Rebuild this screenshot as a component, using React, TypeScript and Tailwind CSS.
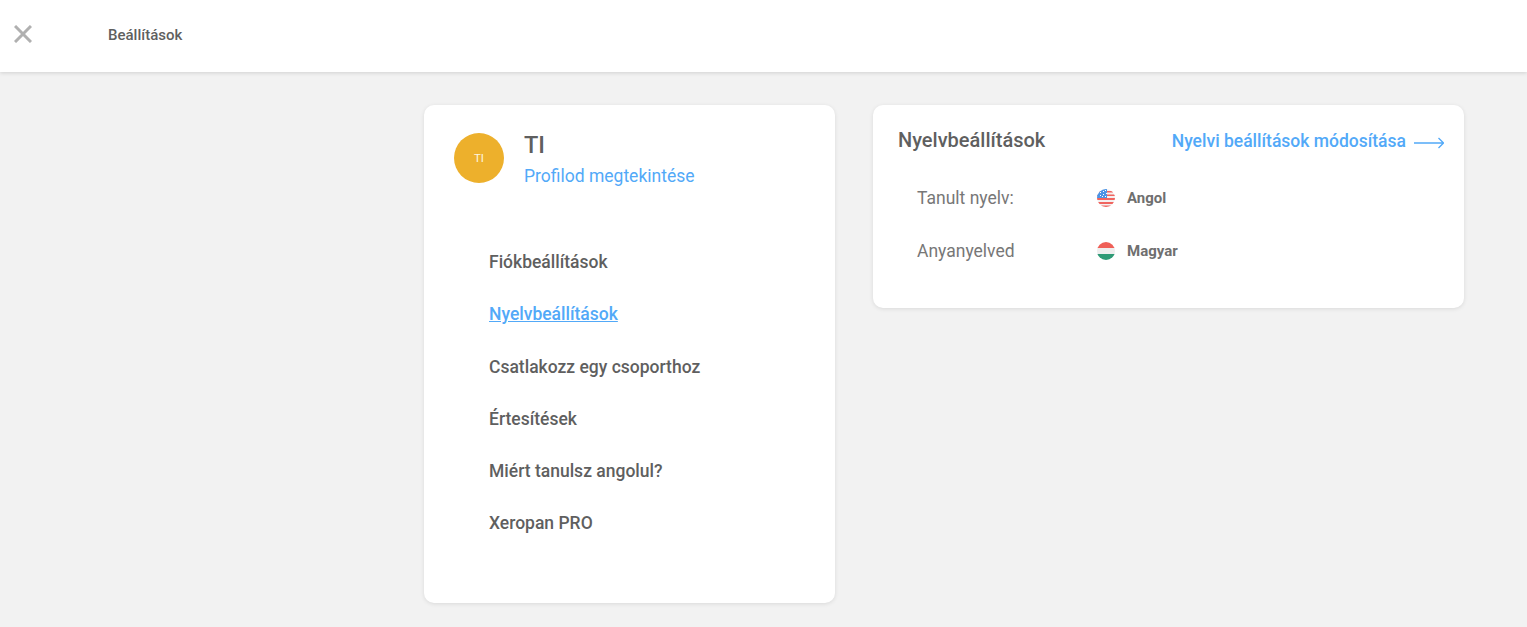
const menu = [
  { label: 'Fiókbeállítások', active: false },
  { label: 'Nyelvbeállítások', active: true },
  { label: 'Csatlakozz egy csoporthoz', active: false },
  { label: 'Értesítések', active: false },
  { label: 'Miért tanulsz angolul?', active: false },
  { label: 'Xeropan PRO', active: false },
];

function UsFlag() {
  return (
    <svg width="18" height="18" viewBox="0 0 18 18" className="shrink-0">
      <defs>
        <clipPath id="us-clip">
          <circle cx="9" cy="9" r="9" />
        </clipPath>
      </defs>
      <g clipPath="url(#us-clip)">
        <rect width="18" height="18" fill="#f5f0f0" />
        <rect y="2" width="18" height="1.5" fill="#f0645f" />
        <rect y="5.5" width="18" height="1.5" fill="#f0645f" />
        <rect y="9" width="18" height="2" fill="#f0645f" />
        <rect y="13" width="18" height="2" fill="#f0645f" />
        <rect y="16.5" width="18" height="2" fill="#f0645f" />
        <rect width="10" height="9" fill="#4a94e6" />
        <path d="M3 3.5h1M6 2.5h1M8 1.5h1M3 6.5h1M6 5.5h1M9 4.5h1M5 7.5h1M8 7.5h1" stroke="#fff" strokeWidth="1" />
      </g>
    </svg>
  );
}

function HuFlag() {
  return (
    <svg width="18" height="18" viewBox="0 0 18 18" className="shrink-0">
      <defs>
        <clipPath id="hu-clip">
          <circle cx="9" cy="9" r="9" />
        </clipPath>
      </defs>
      <g clipPath="url(#hu-clip)">
        <rect width="18" height="6" fill="#ef5f57" />
        <rect y="6" width="18" height="6" fill="#eeeeee" />
        <rect y="12" width="18" height="6" fill="#2f9a76" />
      </g>
    </svg>
  );
}

export default function App() {
  return (
    <div className="min-h-[627px] bg-[#f2f2f2] font-['Roboto',sans-serif] text-[#5f5f5f]">
      <header className="flex h-[72px] items-center bg-white pb-[4px] shadow-[0_1px_4px_rgba(0,0,0,0.14)]">
        <button className="ml-[14px] flex h-[18px] w-[18px] items-center justify-center">
          <svg width="18" height="18" viewBox="0 0 18 18" fill="none" stroke="#b0b0b0" strokeWidth="3">
            <path d="M1 1l16 16M17 1L1 17" />
          </svg>
        </button>
        <span className="ml-[76px] pt-[2px] text-[15px] font-medium">Beállítások</span>
      </header>

      <main className="flex items-start pt-[33px] pl-[424px]">
        <section className="h-[498px] w-[411px] rounded-[10px] bg-white pt-7 pl-[30px] shadow-[0_1px_4px_rgba(0,0,0,0.1)]">
          <div className="flex items-start gap-[20px]">
            <div className="flex h-[50px] w-[50px] items-center justify-center rounded-full bg-[#edb02c] pt-[2px] text-[11.5px] text-[#fdf5e0]">
              TI
            </div>
            <div>
              <div className="text-[23.5px] leading-[24px] font-medium">TI</div>
              <a className="mt-[7px] block text-[17.5px] leading-[24px] text-[#52a9f8]">Profilod megtekintése</a>
            </div>
          </div>

          <nav className="mt-[62.2px] ml-[35px] flex flex-col gap-[28.2px]">
            {menu.map((item) => (
              <a
                key={item.label}
                className={`text-[17.5px] leading-[24px] font-medium ${item.active ? 'text-[#52a9f8] underline' : ''}`}
              >
                {item.label}
              </a>
            ))}
          </nav>
        </section>

        <section className="ml-[38px] h-[203px] w-[591px] rounded-[10px] bg-white px-[20px] pt-[22px] pl-[25px] shadow-[0_1px_4px_rgba(0,0,0,0.1)]">
          <div className="flex h-7 items-start justify-between">
            <h2 className="text-xl leading-[26px] font-medium">Nyelvbeállítások</h2>
            <a className="flex items-center gap-[8px] self-center text-[17.5px] font-medium text-[#52a9f8]">
              Nyelvi beállítások módosítása
              <svg width="30" height="12" viewBox="0 0 30 12" fill="none" stroke="#52a9f8" strokeWidth="1.3" className="mt-[3px]">
                <path d="M0 6h29.5M24.5 1l5 5-5 5" />
              </svg>
            </a>
          </div>

          <div className="mt-[31px] ml-[19px] flex flex-col gap-[29px]">
            <div className="flex h-6 items-center">
              <span className="w-[180px] text-[17.5px] text-[#777777]">Tanult nyelv:</span>
              <UsFlag />
              <span className="ml-[12px] text-[15px] font-bold text-[#6f6f6f]">Angol</span>
            </div>
            <div className="flex h-6 items-center">
              <span className="w-[180px] text-[17.5px] text-[#777777]">Anyanyelved</span>
              <HuFlag />
              <span className="ml-[12px] text-[15px] font-bold text-[#6f6f6f]">Magyar</span>
            </div>
          </div>
        </section>
      </main>
    </div>
  );
}
